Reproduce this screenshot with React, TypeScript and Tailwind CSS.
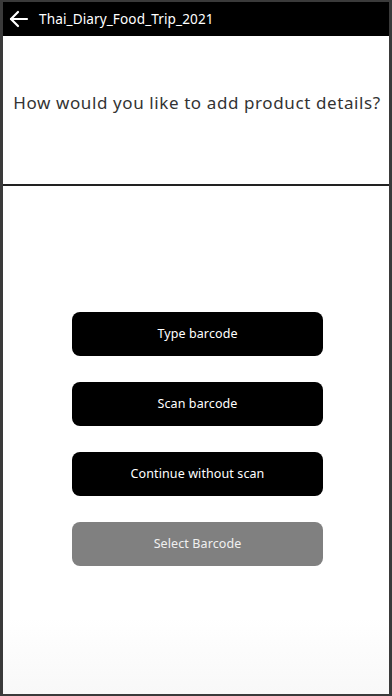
import React from 'react';

const font = { fontFamily: '"Noto Sans", "Open Sans", sans-serif' };

const App: React.FC = () => {
  const buttons = [
    { label: 'Type barcode', disabled: false },
    { label: 'Scan barcode', disabled: false },
    { label: 'Continue without scan', disabled: false },
    { label: 'Select Barcode', disabled: true },
  ];

  return (
    <div
      className="w-[392px] h-[696px] flex flex-col bg-[#3a3a3a] pt-[2px] px-[3px] pb-[2px] overflow-hidden"
      style={font}
    >
      <div className="flex flex-col flex-1 bg-white">
        {/* Header */}
        <div className="h-[34px] bg-black flex items-center gap-[10px] pl-[6px]">
          <svg width="20" height="18" viewBox="0 0 20 18" fill="none" stroke="white" strokeWidth="2.2" strokeLinecap="round" strokeLinejoin="round">
            <path d="M18 9H2" />
            <path d="M9 2L2 9l7 7" />
          </svg>
          <span className="text-white text-[13.6px] tracking-[0.1px]">Thai_Diary_Food_Trip_2021</span>
        </div>

        {/* Question */}
        <div className="h-[150px] flex justify-center pt-[53px] border-b-2 border-[#222]">
          <h1 className="text-[17px] text-[#333] tracking-[0.6px] leading-[28px] pl-[2px]">
            How would you like to add product details?
          </h1>
        </div>

        {/* Actions */}
        <div className="flex-1 flex flex-col items-center pt-[126px] pl-[3px] gap-[26px] bg-gradient-to-b from-white from-85% to-[#f8f8f8]">
          {buttons.map((b) => (
            <button
              key={b.label}
              className={
                b.disabled
                  ? 'w-[251px] h-[44px] rounded-[8px] bg-[#808080] text-[#f0f0f0] text-[12.5px] tracking-[0.1px]'
                  : 'w-[251px] h-[44px] rounded-[8px] bg-black text-white text-[12.5px] tracking-[0.1px]'
              }
            >
              {b.label}
            </button>
          ))}
        </div>
      </div>
    </div>
  );
};

export default App;
